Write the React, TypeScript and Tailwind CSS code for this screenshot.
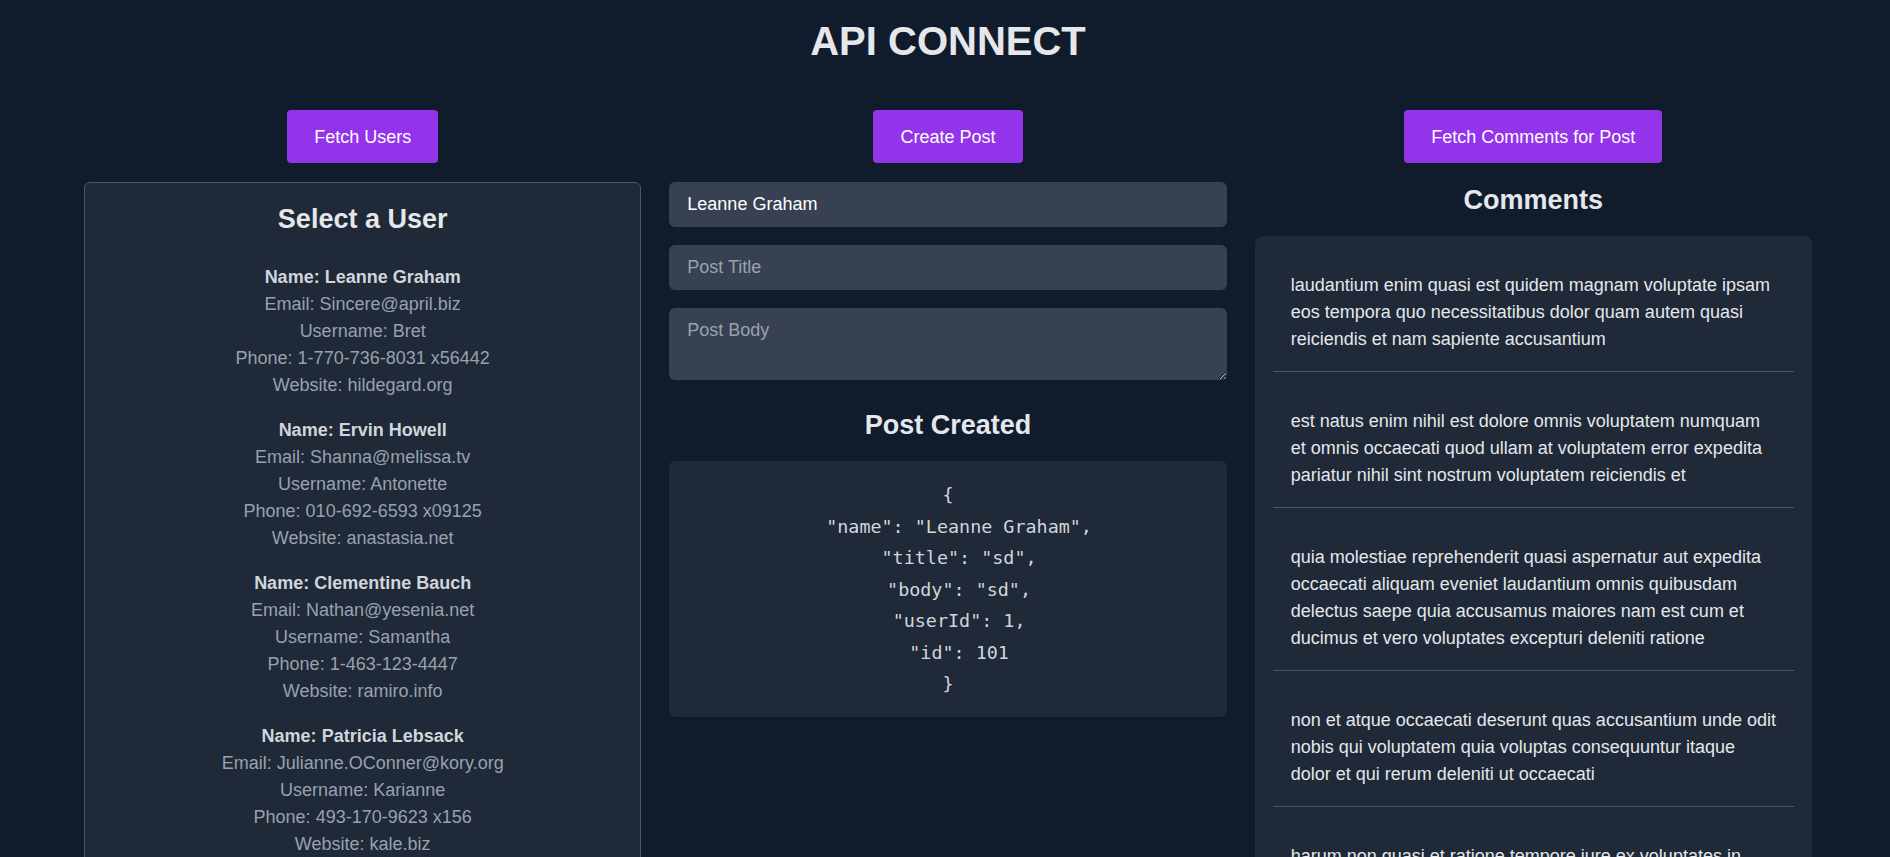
const users = [
  { name: "Leanne Graham", email: "Sincere@april.biz", username: "Bret", phone: "1-770-736-8031 x56442", website: "hildegard.org" },
  { name: "Ervin Howell", email: "Shanna@melissa.tv", username: "Antonette", phone: "010-692-6593 x09125", website: "anastasia.net" },
  { name: "Clementine Bauch", email: "Nathan@yesenia.net", username: "Samantha", phone: "1-463-123-4447", website: "ramiro.info" },
  { name: "Patricia Lebsack", email: "Julianne.OConner@kory.org", username: "Karianne", phone: "493-170-9623 x156", website: "kale.biz" },
  { name: "Chelsey Dietrich", email: "Lucio_Hettinger@annie.ca", username: "Kamren", phone: "(254)954-1289", website: "demarco.info" },
  { name: "Mrs. Dennis Schulist", email: "Karley_Dach@jasper.info", username: "Leopoldo_Corkery", phone: "1-477-935-8478 x6430", website: "ola.org" },
  { name: "Kurtis Weissnat", email: "Telly.Hoeger@billy.biz", username: "Elwyn.Skiles", phone: "210.067.6132", website: "elvis.io" },
  { name: "Nicholas Runolfsdottir V", email: "Sherwood@rosamond.me", username: "Maxime_Nienow", phone: "586.493.6943 x140", website: "jacynthe.com" },
  { name: "Glenna Reichert", email: "Chaim_McDermott@dana.io", username: "Delphine", phone: "(775)976-6794 x41206", website: "conrad.com" },
  { name: "Clementina DuBuque", email: "Rey.Padberg@karina.biz", username: "Moriah.Stanton", phone: "024-648-3804", website: "ambrose.net" },
]

const comments = [
  "laudantium enim quasi est quidem magnam voluptate ipsam eos tempora quo necessitatibus dolor quam autem quasi reiciendis et nam sapiente accusantium",
  "est natus enim nihil est dolore omnis voluptatem numquam et omnis occaecati quod ullam at voluptatem error expedita pariatur nihil sint nostrum voluptatem reiciendis et",
  "quia molestiae reprehenderit quasi aspernatur aut expedita occaecati aliquam eveniet laudantium omnis quibusdam delectus saepe quia accusamus maiores nam est cum et ducimus et vero voluptates excepturi deleniti ratione",
  "non et atque occaecati deserunt quas accusantium unde odit nobis qui voluptatem quia voluptas consequuntur itaque dolor et qui rerum deleniti ut occaecati",
  "harum non quasi et ratione tempore iure ex voluptates in ratione harum architecto fugit inventore cupiditate voluptates magni quo et",
]

const createdPost = {
  name: "Leanne Graham",
  title: "sd",
  body: "sd",
  userId: 1,
  id: 101,
}

const ActionButton = ({ label }: { label: string }) => (
  <button className="h-[53px] px-[27px] rounded bg-[#9333ea] text-white text-lg">
    {label}
  </button>
)

export default function App() {
  return (
    <div className="min-h-screen bg-[#101b2c] pt-[18px] pl-[84px] pr-[78px] font-['Liberation_Sans',Arial,sans-serif]">
      {/* Titulo */}
      <h1 className="text-center text-[40px] leading-[46px] font-bold text-gray-200 mb-[46px]">
        API CONNECT
      </h1>

      <div className="grid grid-cols-3 gap-[28px] items-start">
        {/* Usuarios */}
        <div className="flex flex-col items-center">
          <ActionButton label="Fetch Users" />
          <div className="w-full mt-[19px] bg-[#1f2937] border border-[#4b5563] rounded-md pt-[21px] pb-6 px-5 text-center">
            <h2 className="text-[27px] leading-[31px] font-bold text-gray-200 mb-[29px]">Select a User</h2>
            <div className="flex flex-col gap-[18px] text-lg leading-[27px]">
              {users.map((u) => (
                <div key={u.username}>
                  <p className="font-bold text-gray-300">Name: {u.name}</p>
                  <p className="text-gray-400">Email: {u.email}</p>
                  <p className="text-gray-400">Username: {u.username}</p>
                  <p className="text-gray-400">Phone: {u.phone}</p>
                  <p className="text-gray-400">Website: {u.website}</p>
                </div>
              ))}
            </div>
          </div>
        </div>

        {/* Criar post */}
        <div className="flex flex-col items-center">
          <ActionButton label="Create Post" />
          <div className="w-full mt-[19px] flex flex-col gap-[18px]">
            <input
              className="w-full h-[45px] px-[18px] rounded-md bg-[#374151] text-white text-lg outline-none placeholder:text-gray-400"
              defaultValue="Leanne Graham"
            />
            <input
              className="w-full h-[45px] px-[18px] rounded-md bg-[#374151] text-white text-lg outline-none placeholder:text-gray-400"
              placeholder="Post Title"
            />
            <textarea
              className="w-full h-[72px] px-[18px] pt-[8px] rounded-md bg-[#374151] text-white text-lg outline-none placeholder:text-gray-400 block"
              placeholder="Post Body"
            />
          </div>
          <h2 className="mt-[30px] mb-[20px] text-[27px] leading-[31px] font-bold text-gray-200">Post Created</h2>
          <pre className="w-full bg-[#1f2937] rounded-md pt-[18px] pb-[17px] px-4 text-center text-[18.4px] leading-[31.5px] text-gray-300 font-['DejaVu_Sans_Mono',monospace]">
            {JSON.stringify(createdPost, null, 2)}
          </pre>
        </div>

        {/* Comentarios */}
        <div className="flex flex-col items-center">
          <ActionButton label="Fetch Comments for Post" />
          <h2 className="mt-[22px] mb-[20px] text-[27px] leading-[31px] font-bold text-gray-200">Comments</h2>
          <div className="w-full bg-[#1f2937] rounded-lg px-[18px]">
            {comments.map((c, i) => (
              <div key={i} className="px-[18px] pt-[36px] pb-[18px] border-b border-[#4b5563] text-lg leading-[27px] text-gray-200">
                {c}
              </div>
            ))}
          </div>
        </div>
      </div>
    </div>
  )
}
